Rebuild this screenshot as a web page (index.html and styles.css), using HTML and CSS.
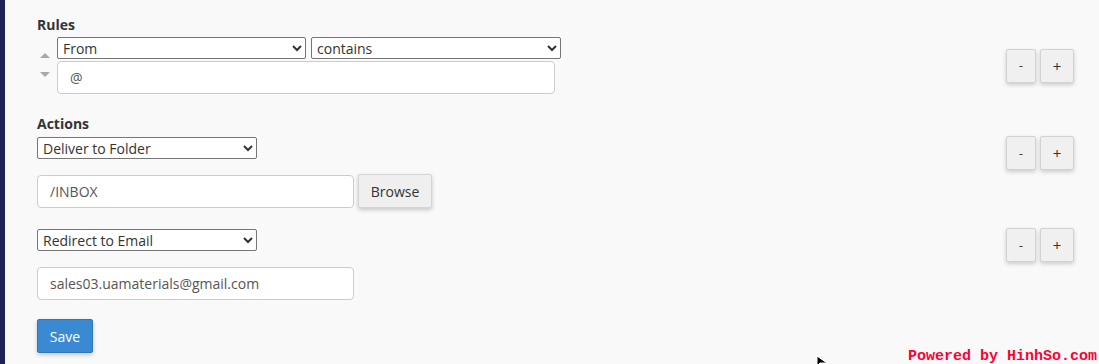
FILE: index.html
```html
<!DOCTYPE html>
<html>
<head>
    <title>Edit Filter</title>
    <link rel="stylesheet" href="styles.css">
</head>
<body>
    <div class="sidebar"></div>

    <div class="content">
        <!-- Rules -->
        <div class="block">
            <label class="block-label">Rules</label>
            <div class="row row-rule">
                <div class="rule">
                    <div class="sort">
                        <span class="arrow-up"></span>
                        <span class="arrow-down"></span>
                    </div>
                    <div class="rule-fields">
                        <div class="rule-selects">
                            <select class="select select-part">
                                <option>From</option>
                            </select>
                            <select class="select select-match">
                                <option>contains</option>
                            </select>
                        </div>
                        <input class="input input-rule" type="text" value="@">
                    </div>
                </div>
                <div class="row-btns">
                    <button class="btn-small btn-minus">-</button>
                    <button class="btn-small btn-plus">+</button>
                </div>
            </div>
        </div>

        <!-- Actions -->
        <div class="block block-actions">
            <label class="block-label">Actions</label>
            <div class="row row-action">
                <div class="action">
                    <select class="select select-action">
                        <option>Deliver to Folder</option>
                    </select>
                    <div class="action-dest">
                        <input class="input input-action" type="text" value="/INBOX">
                        <button class="btn btn-default">Browse</button>
                    </div>
                </div>
                <div class="row-btns">
                    <button class="btn-small btn-minus">-</button>
                    <button class="btn-small btn-plus">+</button>
                </div>
            </div>

            <div class="row row-action row-action-2">
                <div class="action">
                    <select class="select select-action">
                        <option>Redirect to Email</option>
                    </select>
                    <div class="action-dest">
                        <input class="input input-action" type="text" value="sales03.uamaterials@gmail.com">
                    </div>
                </div>
                <div class="row-btns">
                    <button class="btn-small btn-minus">-</button>
                    <button class="btn-small btn-plus">+</button>
                </div>
            </div>
        </div>

        <button class="btn btn-primary">Save</button>
    </div>

    <svg class="cursor" width="12" height="10" viewBox="0 0 12 10">
        <path d="M1 0 L1 10 L4 7 L11 7 Z" fill="#000" stroke="#fff" stroke-width="1"/>
    </svg>
    <div class="watermark">Powered by HinhSo.com</div>
</body>
</html>
```

FILE: styles.css
```css
* {
    margin: 0;
    padding: 0;
    box-sizing: border-box;
}

body {
    font-family: "Open Sans", sans-serif;
    font-size: 14px;
    line-height: 20px;
    color: #333;
    background: #f9f9f9;
    display: flex;
    height: 364px;
    overflow: hidden;
    position: relative;
}

.sidebar {
    width: 5px;
    background: #1c2255;
    flex-shrink: 0;
}

.content {
    flex: 1;
    padding: 15px 25px 0 32px;
}

.block-label {
    display: block;
    font-weight: bold;
    margin-bottom: 2px;
}

.block-actions {
    margin-top: 20px;
}

.block-actions .block-label {
    margin-bottom: 3px;
}

.row {
    display: flex;
    justify-content: space-between;
}

.row-rule {
    align-items: center;
}

.row-action-2 {
    margin-top: 21px;
}

.rule {
    display: flex;
}

.sort {
    width: 20px;
    display: flex;
    flex-direction: column;
    align-items: center;
    padding: 16px 4px 0 0;
    gap: 14px;
}

.arrow-up {
    border-left: 5px solid transparent;
    border-right: 5px solid transparent;
    border-bottom: 5px solid #a9a9a9;
}

.arrow-down {
    border-left: 5px solid transparent;
    border-right: 5px solid transparent;
    border-top: 5px solid #a9a9a9;
}

.rule-fields {
    display: flex;
    flex-direction: column;
    gap: 2px;
}

.rule-selects {
    display: flex;
    gap: 5px;
}

.select {
    font-family: "Open Sans", sans-serif;
    font-size: 14px;
    color: #333;
    height: 22px;
    background: #fff;
    border: 1px solid #767676;
    border-radius: 2px;
    padding: 0 1px;
}

.select-part {
    width: 249px;
}

.select-match {
    width: 250px;
}

.select-action {
    width: 220px;
}

.input {
    font-family: "Open Sans", sans-serif;
    font-size: 14px;
    color: #555;
    height: 33px;
    padding: 0 12px;
    background: #fff;
    border: 1px solid #ccc;
    border-radius: 4px;
}

.input-rule {
    width: 498px;
}

.input-action {
    width: 317px;
}

.action-dest {
    display: flex;
    gap: 4px;
    margin-top: 16px;
}

.row-btns {
    display: flex;
    gap: 4px;
}

.row-action .row-btns {
    margin-top: -1px;
}

.btn-small {
    height: 34px;
    background: #f0f0f0;
    border: 1px solid #d2d2d2;
    border-radius: 2px;
    box-shadow: 0 2px 4px rgba(0, 0, 0, 0.18);
    font-family: "Open Sans", sans-serif;
    font-size: 12px;
    color: #333;
    cursor: pointer;
}

.btn-minus {
    width: 30px;
}

.btn-plus {
    width: 34px;
    font-size: 15px;
}

.btn {
    font-family: "Open Sans", sans-serif;
    font-size: 14px;
    height: 34px;
    border-radius: 2px;
    cursor: pointer;
    box-shadow: 0 2px 4px rgba(0, 0, 0, 0.2);
}

.btn-default {
    width: 74px;
    margin-top: -1px;
    background: #efefef;
    border: 1px solid #d4d4d4;
    color: #333;
}

.btn-primary {
    margin-top: 19px;
    width: 56px;
    background: #398ad2;
    border: 1px solid #2f78bb;
    color: #fff;
}

.watermark {
    position: absolute;
    right: 2px;
    bottom: 0;
    font-family: "Liberation Mono", monospace;
    font-weight: bold;
    font-size: 15px;
    line-height: 15px;
    color: #ff0033;
}

.cursor {
    position: absolute;
    left: 816px;
    top: 356px;
}
```
